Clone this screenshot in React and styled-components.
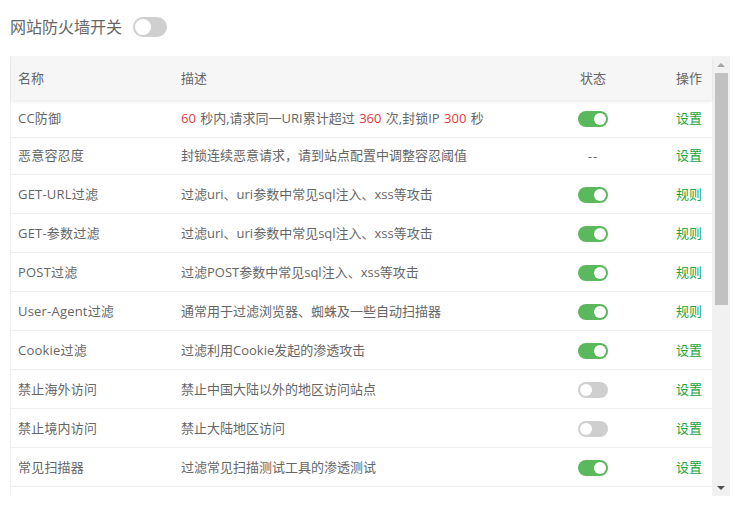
import React from "react";
import styled, { createGlobalStyle } from "styled-components";

const Global = createGlobalStyle`
  html, body { margin: 0; padding: 0; background: #fff; }
  body { font-family: "Open Sans", "Noto Sans CJK SC", sans-serif; font-size: 13px; color: #666; }
`;
const Page = styled.div`
  width: 734px; height: 506px; overflow: hidden; box-sizing: border-box;
  padding: 15px 4px 0 10px;
`;
const TopBar = styled.div`
  display: flex; align-items: center; gap: 11px; height: 24px; margin-bottom: 17px;
`;
const TopLabel = styled.span`
  font-size: 16px; line-height: 24px; color: #666;
`;
const Frame = styled.div`
  display: flex; height: 440px; overflow: hidden;
`;
const TableWrap = styled.div`
  width: 702px; border-left: 1px solid #eee; box-sizing: border-box; position: relative;
`;
const Table = styled.table`
  width: 701px; border-collapse: collapse; table-layout: fixed;
`;
const HeadRow = styled.tr`
  background: #f6f6f6; height: 44px; box-shadow: 0 2px 3px rgba(0,0,0,.07);
`;
const Th = styled.th`
  font-weight: 400; font-size: 13px; color: #666; padding: 0 ${p => p.$pad || 7}px 2px 7px;
  text-align: ${p => p.$align || "left"};
`;
const Row = styled.tr`
  height: ${p => p.$h}px; border-bottom: 1px solid #eee;
  & > td { padding-bottom: ${p => (p.$h === 39 ? 1 : 2)}px; }
`;
const Td = styled.td`
  font-size: 13px; color: #666; padding: 0 ${p => p.$pad || 7}px 0 7px; white-space: nowrap;
  text-align: ${p => p.$align || "left"};
`;
const NameCell = styled(Td)`letter-spacing: .2px;`;
const DescCell = styled(Td)`word-spacing: 1px;`;
const StatusCell = styled(Td)`
  && { padding: ${p => p.$top}px 7px 0; }
`;
const StatusBox = styled.div`
  display: flex; justify-content: center; align-items: center; height: 16px;
`;
const Red = styled.span`color: #e4393c;`;
const Action = styled.a`color: #20a53a; font-size: 13px;`;
const Dash = styled.span`color: #666; letter-spacing: 1px;`;
const Track = styled.span`
  display: block; flex: none; position: relative; box-sizing: border-box;
  width: ${p => p.$w}px; height: ${p => p.$h}px; border-radius: ${p => p.$h / 2}px;
  background: ${p => p.$on ? "#5cb85c" : "#cfcfcf"};
`;
const Knob = styled.span`
  position: absolute; top: 2px; ${p => p.$on ? "right: 2px;" : "left: 2px;"}
  width: ${p => p.$h - 4}px; height: ${p => p.$h - 4}px; border-radius: 50%; background: #fff;
`;
const Bar = styled.div`
  width: 18px; height: 440px; background: #f1f1f1; display: flex; flex-direction: column; align-items: center;
`;
const Arrow = styled.div`
  height: 17px; flex: none; display: flex; align-items: center; justify-content: center;
  &::before {
    content: ""; width: 0; height: 0; border-left: 4px solid transparent; border-right: 4px solid transparent;
    ${p => p.$up ? "border-bottom: 4px solid #a3a3a3;" : "border-top: 4px solid #505050;"}
  }
`;
const Thumb = styled.div`
  width: 13px; height: 232px; background: #c1c1c1; flex: none;
`;
const Spacer = styled.div`flex: 1;`;

const Toggle = ({ on, w = 30, h = 16 }) => (
  <Track $on={on} $w={w} $h={h}><Knob $on={on} $h={h} /></Track>
);

const rows = [
  ["CC防御", <><Red>60</Red> 秒内,请求同一URI累计超过 <Red>360</Red> 次,封锁IP <Red>300</Red> 秒</>, true, "设置", 37],
  ["恶意容忍度", "封锁连续恶意请求，请到站点配置中调整容忍阈值", null, "设置", 37],
  ["GET-URL过滤", "过滤uri、uri参数中常见sql注入、xss等攻击", true, "规则", 39],
  ["GET-参数过滤", "过滤uri、uri参数中常见sql注入、xss等攻击", true, "规则", 39],
  ["POST过滤", "过滤POST参数中常见sql注入、xss等攻击", true, "规则", 39],
  ["User-Agent过滤", "通常用于过滤浏览器、蜘蛛及一些自动扫描器", true, "规则", 39],
  ["Cookie过滤", "过滤利用Cookie发起的渗透攻击", true, "设置", 39],
  ["禁止海外访问", "禁止中国大陆以外的地区访问站点", false, "设置", 39],
  ["禁止境内访问", "禁止大陆地区访问", false, "设置", 39],
  ["常见扫描器", "过滤常见扫描测试工具的渗透测试", true, "设置", 39],
];

export default function App() {
  return (
    <Page>
      <Global />
      <TopBar>
        <TopLabel>网站防火墙开关</TopLabel>
        <Toggle on={false} w={34} h={20} />
      </TopBar>
      <Frame>
        <TableWrap>
          <Table>
            <colgroup>
              <col style={{ width: 163 }} />
              <col style={{ width: 386 }} />
              <col style={{ width: 66 }} />
              <col style={{ width: 86 }} />
            </colgroup>
            <thead>
              <HeadRow>
                <Th>名称</Th>
                <Th>描述</Th>
                <Th $align="center">状态</Th>
                <Th $align="right" $pad={10}>操作</Th>
              </HeadRow>
            </thead>
            <tbody>
              {rows.map(([name, desc, state, action, h]) => (
                <Row key={name} $h={h}>
                  <NameCell>{name}</NameCell>
                  <DescCell>{desc}</DescCell>
                  <StatusCell $top={h === 39 ? 2 : 1}>
                    <StatusBox>{state === null ? <Dash>--</Dash> : <Toggle on={state} />}</StatusBox>
                  </StatusCell>
                  <Td $align="right" $pad={10}><Action>{action}</Action></Td>
                </Row>
              ))}
            </tbody>
          </Table>
        </TableWrap>
        <Bar>
          <Arrow $up />
          <Thumb />
          <Spacer />
          <Arrow />
        </Bar>
      </Frame>
    </Page>
  );
}
